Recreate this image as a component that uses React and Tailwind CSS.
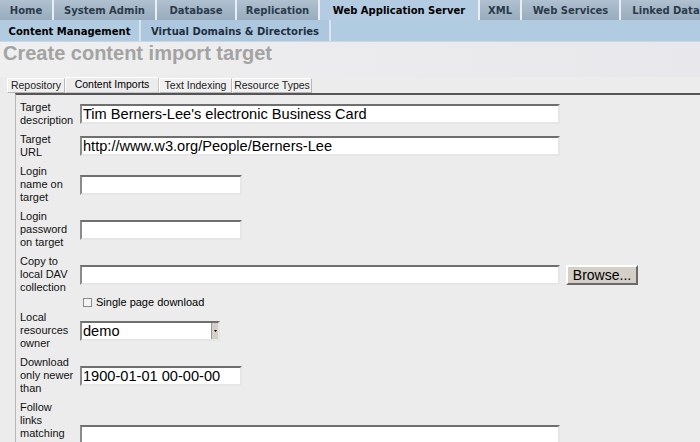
import React from 'react';

const topTabs = [
  { label: 'Home', w: 52 },
  { label: 'System Admin', w: 101 },
  { label: 'Database', w: 78 },
  { label: 'Replication', w: 81 },
  { label: 'Web Application Server', w: 158, active: true },
  { label: 'XML', w: 40 },
  { label: 'Web Services', w: 97 },
  { label: 'Linked Data', w: 90 },
];

const subTabs = [
  { label: 'Content Management', w: 141, active: true },
  { label: 'Virtual Domains & Directories', w: 190 },
];

const innerTabs = [
  { label: 'Repository', w: 58 },
  { label: 'Content Imports', w: 94, active: true },
  { label: 'Text Indexing', w: 73 },
  { label: 'Resource Types', w: 80 },
];

// campo de texto estilo windows classic
function TextBox({ value = '', w }) {
  return (
    <div
      className="h-[20px] bg-white border-2 border-t-[#6f6f6f] border-l-[#8a8a8a] border-b-[#e6e6e6] border-r-[#e6e6e6] pl-[1px] text-[14.6px] leading-[16px] text-black whitespace-nowrap overflow-hidden"
      style={{ width: w }}
    >
      {value}
    </div>
  );
}

function Row({ label, children }) {
  return (
    <div className="flex items-center py-[3px]">
      <div className="w-[57px] shrink-0 text-[11px] leading-[13px] text-[#111]">
        {label.map((l) => (
          <div key={l}>{l}</div>
        ))}
      </div>
      <div className="ml-[3px] flex items-center">{children}</div>
    </div>
  );
}

export default function App() {
  return (
    <div
      className="w-[700px] h-[442px] overflow-hidden bg-[#ececec]"
      style={{ fontFamily: '"Liberation Sans", Arial, sans-serif' }}
    >
      {/* abas principais */}
      <div
        className="flex h-[20px] bg-[#e9eef3] gap-[2px]"
        style={{ fontFamily: '"DejaVu Sans", Verdana, sans-serif' }}
      >
        {topTabs.map((t) => (
          <div
            key={t.label}
            className={
              t.active
                ? 'shrink-0 flex items-center justify-center bg-[#b3cce1] text-black text-[10px] font-bold whitespace-nowrap'
                : 'shrink-0 flex items-center justify-center bg-gradient-to-b from-[#b0c1d0] to-[#98acbd] text-[#2b3b4c] text-[10px] font-bold whitespace-nowrap'
            }
            style={{ width: t.w }}
          >
            {t.label}
          </div>
        ))}
      </div>

      {/* sub abas */}
      <div
        className="flex h-[22px] bg-[#b1cbe0] border-b border-[#c9d8e5]"
        style={{ fontFamily: '"DejaVu Sans", Verdana, sans-serif' }}
      >
        {subTabs.map((t) => (
          <div
            key={t.label}
            className={
              t.active
                ? 'shrink-0 flex items-center justify-center bg-[#b1cbe0] border-r-2 border-[#d8e4ee] text-black text-[10px] font-bold pt-[2px]'
                : 'shrink-0 flex items-center justify-center bg-[#adc8de] border-r-2 border-[#d8e4ee] text-[#1f2f40] text-[10px] font-bold pt-[2px]'
            }
            style={{ width: t.w }}
          >
            {t.label}
          </div>
        ))}
      </div>

      {/* titulo */}
      <div className="h-[35px] pl-[3px] bg-gradient-to-r from-[#efefef] to-[#e8e8ec]">
        <h1 className="text-[20px] leading-[22px] font-bold text-[#a3a3a3]">
          Create content import target
        </h1>
      </div>

      {/* abas internas */}
      <div className="flex pl-[7px] h-[16px] items-end">
        {innerTabs.map((t) => (
          <div
            key={t.label}
            className={
              t.active
                ? 'shrink-0 h-[16px] flex items-center justify-center whitespace-nowrap text-[10.5px] text-black border border-[#c8c8c8] border-t-white border-l-white bg-[#ececec]'
                : 'shrink-0 h-[15px] flex items-center justify-center whitespace-nowrap text-[10.5px] text-[#222] border border-[#b8b8b8] border-t-white border-l-white bg-[#f0f0f0]'
            }
            style={{ width: t.w }}
          >
            {t.label}
          </div>
        ))}
      </div>

      {/* painel */}
      <div className="ml-[15px] border-t-2 border-t-[#555] border-l border-l-[#b8b8b8] pl-[4px] pt-[3px] h-full bg-[#ececec]">
        <Row label={['Target', 'description']}>
          <TextBox w={480} value="Tim Berners-Lee's electronic Business Card" />
        </Row>
        <Row label={['Target', 'URL']}>
          <TextBox w={480} value="http://www.w3.org/People/Berners-Lee" />
        </Row>
        <Row label={['Login', 'name on', 'target']}>
          <TextBox w={162} />
        </Row>
        <Row label={['Login', 'password', 'on target']}>
          <TextBox w={162} />
        </Row>
        <Row label={['Copy to', 'local DAV', 'collection']}>
          <TextBox w={480} />
          <button className="ml-[6px] h-[20px] w-[72px] bg-[#d4d0c8] border-2 border-t-white border-l-white border-b-[#6a6a6a] border-r-[#6a6a6a] text-[14px] leading-[14px] text-black">
            Browse...
          </button>
        </Row>
        <div className="flex items-center h-[12px] mt-[-1px] pl-[63px]">
          <div className="w-[9px] h-[9px] border border-[#8a8a8a] bg-[#f4f4f4]" />
          <span className="ml-[4px] text-[11px] text-black">Single page download</span>
        </div>
        <Row label={['Local', 'resources', 'owner']}>
          <div className="flex w-[140px] h-[20px] bg-white border-2 border-t-[#6f6f6f] border-l-[#8a8a8a] border-b-[#e6e6e6] border-r-[#e6e6e6]">
            <span className="flex-1 pl-[1px] text-[14.6px] leading-[16px] text-black">demo</span>
            <div className="w-[7px] h-full bg-[#d4d0c8] border-l border-[#999] flex items-center justify-center">
              <svg width="3" height="2" viewBox="0 0 3 2">
                <path d="M0 0H3L1.5 2Z" fill="#000" />
              </svg>
            </div>
          </div>
        </Row>
        <Row label={['Download', 'only newer', 'than']}>
          <TextBox w={162} value="1900-01-01 00-00-00" />
        </Row>
        <div className="flex items-start py-[3px]">
          <div className="w-[57px] shrink-0 text-[11px] leading-[13px] text-[#111]">
            <div>Follow</div>
            <div>links</div>
            <div>matching</div>
          </div>
          <div className="ml-[3px] mt-[24px]">
            <TextBox w={480} />
          </div>
        </div>
      </div>
    </div>
  );
}
